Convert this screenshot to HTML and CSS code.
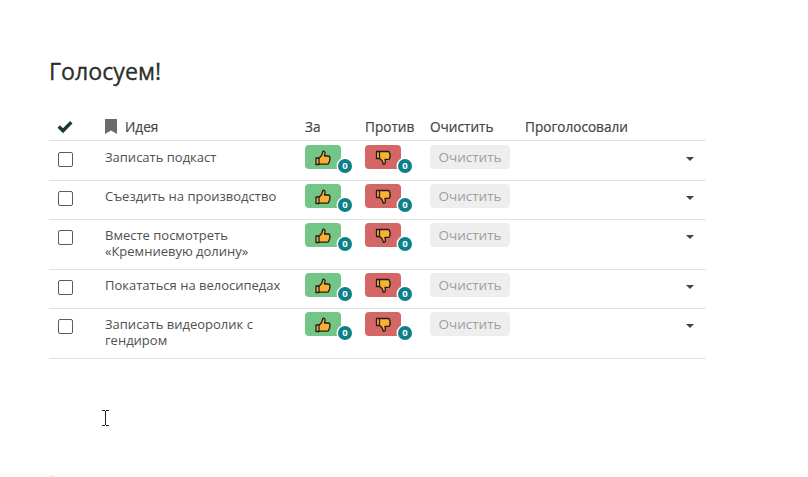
FILE: index.html
```html
<!DOCTYPE html>
<html lang="ru">
<head>
<meta charset="utf-8">
<title>Голосуем!</title>
<link rel="stylesheet" href="styles.css">
</head>
<body>
<svg width="0" height="0" class="defs">
  <symbol id="up" viewBox="0 0 16 16"><path d="M1 8h3v6.500H1zM4 8.200 6.600 5.500 8 1.200c1.600 0 2.200 1 2 2.400L9.500 6h3.800c1.300 0 1.800 1 1.400 2 .6.600.5 1.500-.1 2 .3.800.1 1.500-.6 2 .1 1.200-.5 2-1.600 2.200H6.500L4 13.800z" fill="#fbb034" stroke="#1d1d1b" stroke-width="1.300" stroke-linejoin="round"/></symbol>
  <symbol id="down" viewBox="0 0 16 16"><path d="M1.500 1.500h3v7h-3zM4.500 1.500h8.700c1 .2 1.500 1 1.400 2 .6.500.7 1.200.3 2 .5.600.4 1.400-.2 2 .3 1-.3 1.800-1.400 1.800H10l.4 2.500c.2 1.500-.5 2.500-2 2.500L7 10.500 4.500 8.500z" fill="#fbb034" stroke="#1d1d1b" stroke-width="1.300" stroke-linejoin="round"/></symbol>
</svg>
<main class="page">
  <h1 class="title">Голосуем!</h1>
  <table class="votes">
    <thead>
      <tr>
        <th class="c-check"><svg class="check-icon" viewBox="0 0 16 13" width="16" height="13"><path d="M1.700 6.500 6 10.800 14.300 2.300" fill="none" stroke="#1c3a24" stroke-width="3.400"/></svg></th>
        <th class="c-idea"><span class="idea-head"><svg viewBox="0 0 12 15" width="12" height="15"><path d="M0 0h12v15L6 11.500 0 15z" fill="#6b6b6b"/></svg>Идея</span></th>
        <th class="c-for">За</th>
        <th class="c-against">Против</th>
        <th class="c-clear">Очистить</th>
        <th class="c-voted">Проголосовали</th>
        <th class="c-caret"></th>
      </tr>
    </thead>
    <tbody>
      <tr>
        <td><span class="box"></span></td><td class="idea">Записать подкаст</td>
        <td><span class="vote pro"><svg><use href="#up"/></svg><b class="count">0</b></span></td>
        <td><span class="vote con"><svg><use href="#down"/></svg><b class="count">0</b></span></td>
        <td><span class="clear">Очистить</span></td><td></td><td><span class="caret"></span></td>
      </tr>
      <tr>
        <td><span class="box"></span></td><td class="idea">Съездить на производство</td>
        <td><span class="vote pro"><svg><use href="#up"/></svg><b class="count">0</b></span></td>
        <td><span class="vote con"><svg><use href="#down"/></svg><b class="count">0</b></span></td>
        <td><span class="clear">Очистить</span></td><td></td><td><span class="caret"></span></td>
      </tr>
      <tr>
        <td><span class="box"></span></td><td class="idea">Вместе посмотреть<br>«Кремниевую долину»</td>
        <td><span class="vote pro"><svg><use href="#up"/></svg><b class="count">0</b></span></td>
        <td><span class="vote con"><svg><use href="#down"/></svg><b class="count">0</b></span></td>
        <td><span class="clear">Очистить</span></td><td></td><td><span class="caret"></span></td>
      </tr>
      <tr>
        <td><span class="box"></span></td><td class="idea">Покататься на велосипедах</td>
        <td><span class="vote pro"><svg><use href="#up"/></svg><b class="count">0</b></span></td>
        <td><span class="vote con"><svg><use href="#down"/></svg><b class="count">0</b></span></td>
        <td><span class="clear">Очистить</span></td><td></td><td><span class="caret"></span></td>
      </tr>
      <tr>
        <td><span class="box"></span></td><td class="idea">Записать видеоролик с<br>гендиром</td>
        <td><span class="vote pro"><svg><use href="#up"/></svg><b class="count">0</b></span></td>
        <td><span class="vote con"><svg><use href="#down"/></svg><b class="count">0</b></span></td>
        <td><span class="clear">Очистить</span></td><td></td><td><span class="caret"></span></td>
      </tr>
    </tbody>
  </table>
</main>
<svg class="cursor" viewBox="0 0 7 16" width="7" height="16"><path d="M0 .5h3M4 .5h3M3.500 1v14M0 15.500h3M4 15.500h3" fill="none" stroke="#1c2b20"/></svg>
<span class="crumb"></span>
</body>
</html>
```
FILE: styles.css
```css
* { box-sizing: border-box; }
html, body { margin: 0; padding: 0; }
body {
  width: 808px;
  height: 477px;
  overflow: hidden;
  position: relative;
  background: #fff;
  font-family: "Open Sans", "Noto Sans", sans-serif;
  color: #4a4a4a;
}
.defs { position: absolute; }
.page { padding: 56px 0 0 49px; }
.title {
  margin: 0 0 32px;
  font-size: 23.200px;
  line-height: 30px;
  font-weight: 400;
  color: #2b2f2a;
  -webkit-text-stroke: 0.3px #2b2f2a;
}
.votes {
  width: 657px;
  border-collapse: collapse;
  table-layout: fixed;
  font-size: 13px;
}
.votes th {
  height: 22px;
  padding: 0 0 4px;
  text-align: left;
  vertical-align: bottom;
  font-weight: 400;
  font-size: 13.600px;
  line-height: 18px;
  color: #444;
  -webkit-text-stroke: 0.2px #444;
  border-bottom: 1px solid #e2e2e2;
}
.c-check { width: 56px; }
.c-idea { width: 200px; }
.c-for { width: 60px; }
.c-against { width: 65px; }
.c-clear { width: 95px; }
.c-voted { width: 155px; }
.c-caret { width: 26px; }
th.c-check { padding-left: 8px; }
.check-icon { display: block; margin-bottom: 3px; }
.idea-head { display: flex; align-items: center; gap: 8px; }
.idea-head svg { margin-bottom: 2px; }
.votes td {
  padding: 3px 0 11px;
  vertical-align: top;
  border-bottom: 1px solid #e2e2e2;
}
.votes tbody tr:first-child td { padding-top: 4px; }
.votes td.idea { padding: 7px 0 10px; line-height: 16px; color: #4f4f4f; }
.votes tbody tr:first-child td.idea { padding-top: 8px; }
.box {
  display: block;
  width: 15px;
  height: 15px;
  margin: 7px 0 0 8.500px;
  border: 1.500px solid #5c5c5c;
  border-radius: 2px;
}
.vote {
  display: flex;
  align-items: center;
  justify-content: center;
  position: relative;
  width: 36px;
  height: 24px;
  border-radius: 4px;
}
.vote svg { width: 16px; height: 16px; margin-top: 2px; }
.pro { background: #73c686; }
.con { background: #d46666; }
.count {
  position: absolute;
  right: -11px;
  bottom: -4px;
  width: 14px;
  height: 14px;
  border-radius: 50%;
  background: #0b8089;
  box-shadow: 0 0 0 1.500px #fff;
  color: #fff;
  font-size: 9.500px;
  line-height: 14px;
  text-align: center;
  font-weight: 700;
}
.clear {
  display: block;
  width: 80px;
  height: 24px;
  border-radius: 4px;
  background: #eeeeee;
  color: #9e9e9e;
  text-align: center;
  font-size: 13.500px;
  line-height: 24px;
}
.caret {
  display: block;
  width: 0;
  height: 0;
  margin: 12px 0 0 5.500px;
  border-left: 4.500px solid transparent;
  border-right: 4.500px solid transparent;
  border-top: 4.500px solid #444;
}
.cursor { position: absolute; left: 102px; top: 410px; }
.crumb { position: absolute; left: 49px; top: 475px; width: 6px; height: 2px; background: #eee; }
```
